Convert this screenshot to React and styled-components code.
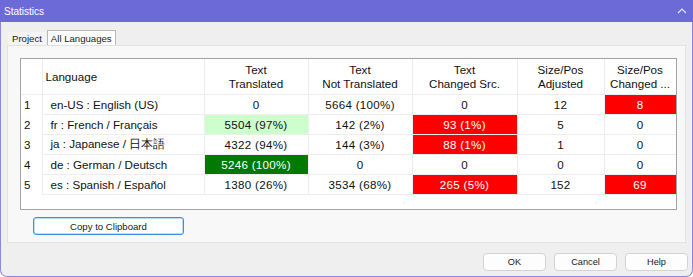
import React from "react";
import styled, { createGlobalStyle } from "styled-components";

const GlobalStyle = createGlobalStyle`
  html, body {
    margin: 0;
    padding: 0;
    background: #ffffff;
  }
  body {
    font-family: "Liberation Sans", Arial, sans-serif;
  }
`;

const Window = styled.div`
  width: 693px;
  height: 277px;
  display: flex;
  flex-direction: column;
  box-sizing: border-box;
`;

const TitleBar = styled.div`
  height: 22px;
  flex: none;
  background: #6b6ad6;
  color: #ffffff;
  display: flex;
  align-items: center;
  justify-content: space-between;
  padding: 0 6px 0 4px;
  font-size: 10px;
`;

const Body = styled.div`
  flex: 1;
  display: flex;
  flex-direction: column;
  background: #efefef;
  border: 1px solid #8c89da;
  border-top: none;
  border-radius: 0 0 7px 7px;
`;

const TabStrip = styled.div`
  height: 23px;
  display: flex;
  align-items: flex-end;
  padding-left: 7px;
  gap: 1px;
`;

const Tab = styled.div`
  height: ${(p) => (p.$active ? "15px" : "13px")};
  padding: 0 ${(p) => (p.$active ? "3px" : "4px")};
  display: flex;
  align-items: center;
  font-size: 9.6px;
  color: #1a1a1a;
  box-sizing: border-box;
  background: ${(p) => (p.$active ? "#ffffff" : "#f4f4f4")};
  border: ${(p) => (p.$active ? "1px solid #b9b9b9" : "none")};
  border-bottom: none;
`;

const Panel = styled.div`
  height: 198px;
  margin: 0 6px;
  box-sizing: border-box;
  background: #f8f8f8;
  border: 1px solid #e2e2e2;
  padding: 12px 0 0 12px;
  display: flex;
  flex-direction: column;
`;

const GridBox = styled.div`
  width: 657px;
  height: 152px;
  box-sizing: border-box;
  border: 1px solid #a3a3a3;
  background: #ffffff;
  overflow: hidden;
`;

const Grid = styled.table`
  border-collapse: collapse;
  table-layout: fixed;
  width: 655px;
  font-size: 11.6px;
  color: #111111;
`;

const HeadCell = styled.th`
  height: 35px;
  padding: 0 3px;
  font-weight: normal;
  line-height: 14px;
  text-align: ${(p) => (p.$left ? "left" : "center")};
  border-right: 1px solid #ededed;
  border-bottom: 1px solid #ededed;
  white-space: nowrap;
  overflow: hidden;
`;

const RowNum = styled.td`
  height: 19px;
  padding: 0 0 0 3px;
  border-right: 1px solid #ededed;
`;

const Cell = styled.td`
  height: 19px;
  padding: ${(p) => (p.$left ? "0 0 0 8px" : "0")};
  text-align: ${(p) => (p.$left ? "left" : "center")};
  border-right: 1px solid #ededed;
  border-bottom: 1px solid #ededed;
  white-space: nowrap;
  letter-spacing: ${(p) => (p.$left ? "0" : "0.3px")};
  background: ${(p) =>
    p.$tone === "red"
      ? "#ff0000"
      : p.$tone === "dark"
      ? "#007a00"
      : p.$tone === "light"
      ? "#ccffcc"
      : "transparent"};
  color: ${(p) => (p.$tone === "red" || p.$tone === "dark" ? "#ffffff" : "#111111")};
`;

const CopyButton = styled.button`
  margin: 7px 0 0 13px;
  width: 151px;
  height: 18px;
  box-sizing: border-box;
  background: #ffffff;
  border: 1px solid #3f8fe0;
  box-shadow: inset 0 0 0 0.5px #7fb4ea;
  border-radius: 3px;
  font-family: inherit;
  font-size: 9.6px;
  color: #1a1a1a;
  padding: 0;
`;

const Footer = styled.div`
  display: flex;
  justify-content: flex-end;
  gap: 8px;
  padding: 10px 4px 0 0;
`;

const DialogButton = styled.button`
  width: 63px;
  height: 18px;
  box-sizing: border-box;
  background: #fdfdfd;
  border: 1px solid #d3d3d3;
  border-radius: 4px;
  font-family: inherit;
  font-size: 9.2px;
  color: #1a1a1a;
  padding: 0;
`;

const columns = [21, 162, 104, 104, 105, 87, 72];

const rows = [
  {
    lang: "en-US : English (US)",
    cells: [["0"], ["5664 (100%)"], ["0"], ["12"], ["8", "red"]],
  },
  {
    lang: "fr : French / Français",
    cells: [["5504 (97%)", "light"], ["142 (2%)"], ["93 (1%)", "red"], ["5"], ["0"]],
  },
  {
    lang: "ja : Japanese / 日本語",
    cells: [["4322 (94%)"], ["144 (3%)"], ["88 (1%)", "red"], ["1"], ["0"]],
  },
  {
    lang: "de : German / Deutsch",
    cells: [["5246 (100%)", "dark"], ["0"], ["0"], ["0"], ["0"]],
  },
  {
    lang: "es : Spanish / Español",
    cells: [["1380 (26%)"], ["3534 (68%)"], ["265 (5%)", "red"], ["152"], ["69", "red"]],
  },
];

const Chevron = () => (
  <svg width="10" height="6" viewBox="0 0 10 6">
    <path d="M1 5 L5 1 L9 5" fill="none" stroke="#e4e4ff" strokeWidth="1.2" />
  </svg>
);

export default function App() {
  return (
    <>
      <GlobalStyle />
      <Window>
        <TitleBar>
          <span>Statistics</span>
          <Chevron />
        </TitleBar>
        <Body>
          <TabStrip>
            <Tab>Project</Tab>
            <Tab $active>All Languages</Tab>
          </TabStrip>
          <Panel>
            <GridBox>
              <Grid>
                <colgroup>
                  {columns.map((w, i) => (
                    <col key={i} style={{ width: w }} />
                  ))}
                </colgroup>
                <thead>
                  <tr>
                    <HeadCell />
                    <HeadCell $left>Language</HeadCell>
                    <HeadCell>
                      Text
                      <br />
                      Translated
                    </HeadCell>
                    <HeadCell>
                      Text
                      <br />
                      Not Translated
                    </HeadCell>
                    <HeadCell>
                      Text
                      <br />
                      Changed Src.
                    </HeadCell>
                    <HeadCell>
                      Size/Pos
                      <br />
                      Adjusted
                    </HeadCell>
                    <HeadCell>
                      Size/Pos
                      <br />
                      Changed ...
                    </HeadCell>
                  </tr>
                </thead>
                <tbody>
                  {rows.map((r, i) => (
                    <tr key={i}>
                      <RowNum>{i + 1}</RowNum>
                      <Cell $left>{r.lang}</Cell>
                      {r.cells.map(([v, tone], j) => (
                        <Cell key={j} $tone={tone}>
                          {v}
                        </Cell>
                      ))}
                    </tr>
                  ))}
                </tbody>
              </Grid>
            </GridBox>
            <CopyButton>Copy to Clipboard</CopyButton>
          </Panel>
          <Footer>
            <DialogButton>OK</DialogButton>
            <DialogButton>Cancel</DialogButton>
            <DialogButton>Help</DialogButton>
          </Footer>
        </Body>
      </Window>
    </>
  );
}
